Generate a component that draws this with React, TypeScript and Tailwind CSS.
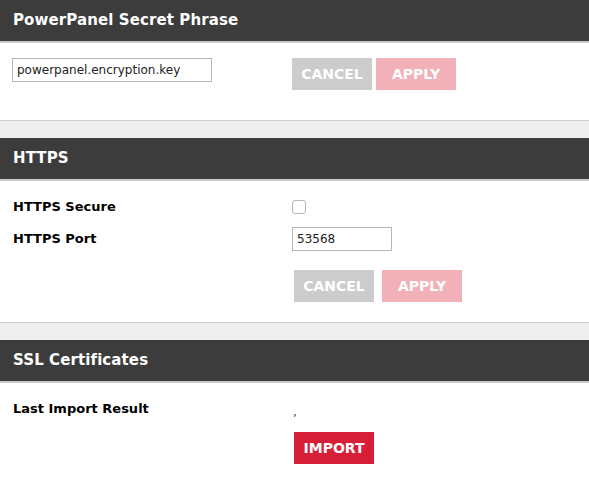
import React from 'react'

const font = { fontFamily: '"DejaVu Sans", "Liberation Sans", sans-serif' }

function Header({ title }: { title: string }) {
  return (
    <div className="h-[41px] bg-[#3c3c3c] border-b-2 border-[#c9c9c9] box-content flex items-center px-[13px]">
      <h2 className="text-white font-bold text-[15px] tracking-[0.1px]">{title}</h2>
    </div>
  )
}

function Spacer() {
  return <div className="h-[17px] bg-[#efefef] border-t border-[#cfcfcf] box-content" />
}

function Btn({ label, tone }: { label: string; tone: 'grey' | 'pink' | 'red' }) {
  const cls =
    tone === 'grey' ? 'bg-[#cccccc]' : tone === 'pink' ? 'bg-[#f2b1b9]' : 'bg-[#d81f3a]'
  return (
    <button className={`${cls} w-[80px] h-[32px] text-white font-bold text-[14px] flex items-center justify-center`}>
      {label}
    </button>
  )
}

export default function App() {
  return (
    <div className="w-[589px] h-[478px] bg-white overflow-hidden" style={font}>
      <Header title="PowerPanel Secret Phrase" />
      <div className="h-[77px] flex items-start pt-[15px] pl-[12px]">
        <input
          defaultValue="powerpanel.encryption.key"
          className="w-[200px] h-[24px] border border-[#b5b5b5] px-[4px] text-[12px] text-[#222] outline-none"
        />
        <div className="ml-[80px] flex gap-[4px]">
          <Btn label="CANCEL" tone="grey" />
          <Btn label="APPLY" tone="pink" />
        </div>
      </div>

      <Spacer />
      <Header title="HTTPS" />
      <div className="h-[141px] pl-[13px] pt-[14px]">
        <div className="flex items-center h-[24px]">
          <span className="w-[279px] font-bold text-[13px] text-black">HTTPS Secure</span>
          <span className="w-[14px] h-[14px] border border-[#b5b5b5] rounded-[3px] bg-white" />
        </div>
        <div className="flex items-center h-[24px] mt-[8px]">
          <span className="w-[279px] font-bold text-[13px] text-black">HTTPS Port</span>
          <input
            defaultValue="53568"
            className="w-[100px] h-[24px] border border-[#b5b5b5] px-[4px] text-[12px] text-[#222] outline-none"
          />
        </div>
        <div className="flex gap-[8px] mt-[19px] ml-[281px]">
          <Btn label="CANCEL" tone="grey" />
          <Btn label="APPLY" tone="pink" />
        </div>
      </div>

      <Spacer />
      <Header title="SSL Certificates" />
      <div className="pl-[13px] pt-[16px]">
        <div className="flex items-start h-[24px]">
          <span className="w-[280px] font-bold text-[13px] text-black">Last Import Result</span>
          <span className="text-[12px] text-[#1a4d8c] mt-[4px]">,</span>
        </div>
        <div className="ml-[281px] mt-[9px]">
          <Btn label="IMPORT" tone="red" />
        </div>
      </div>
    </div>
  )
}
